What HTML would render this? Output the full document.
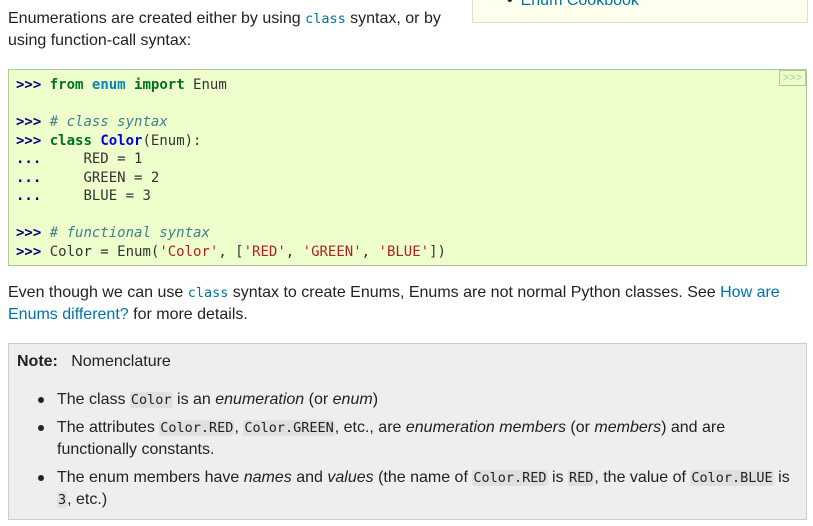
<!DOCTYPE html>
<html><head><meta charset="utf-8"><style>
body{margin:0;width:813px;height:526px;overflow:hidden;background:#fff;font-family:"Liberation Sans",sans-serif;font-size:16px;color:#222;}
.abs{position:absolute;}
p{margin:0;line-height:22px;}
code{font-family:"DejaVu Sans Mono","Liberation Mono",monospace;font-size:13.5px;}
.c{color:#0072aa;}
.nc{background:#e0e0e0;border-radius:3px;padding:0 1px;}
a{color:#0072aa;text-decoration:none;}
pre{margin:0;font-family:"DejaVu Sans Mono","Liberation Mono",monospace;font-size:14px;line-height:18.5px;color:#333;}
.k{color:#007020;font-weight:bold}
.cm{color:#408090;font-style:italic}
.s{color:#b22222}
.cl{color:#0000dd;font-weight:bold}
.pr{color:#000080;font-weight:bold}
ul{list-style:none}
li{line-height:22px;margin-bottom:6px;position:relative}
li:before{content:"";position:absolute;left:-19px;top:8px;width:6px;height:6px;border-radius:50%;background:#222}
</style></head><body>
<div class="abs" style="left:472px;top:-10px;width:334px;height:31px;background:#ffffee;border:1px solid #ddd;"></div>
<div class="abs" style="left:507px;top:-8px;color:#0072aa;"><span style="color:#222;margin-right:8px">•</span>Enum Cookbook</div>
<p class="abs" style="left:8px;top:8px;width:460px">Enumerations are created either by using <code class="c">class</code> syntax, or by using function-call syntax:</p>
<div class="abs" style="left:8px;top:69px;width:797px;height:195px;background:#eeffcc;border:1px solid #aacc99;">
<div class="abs" style="right:0;top:0;width:25px;height:14px;border:1px solid #aacc99;color:#aacc99;font-size:11px;line-height:14px;text-align:center">&gt;&gt;&gt;</div>
<pre style="position:absolute;left:7px;top:6px"><span class="pr">&gt;&gt;&gt;</span> <span class="k">from</span> <span class="cl" style="color:#0e84b5">enum</span> <span class="k">import</span> Enum

<span class="pr">&gt;&gt;&gt;</span> <span class="cm"># class syntax</span>
<span class="pr">&gt;&gt;&gt;</span> <span class="k">class</span> <span class="cl">Color</span>(Enum):
<span class="pr">...</span>     RED = 1
<span class="pr">...</span>     GREEN = 2
<span class="pr">...</span>     BLUE = 3

<span class="pr">&gt;&gt;&gt;</span> <span class="cm"># functional syntax</span>
<span class="pr">&gt;&gt;&gt;</span> Color = Enum(<span class="s">'Color'</span>, [<span class="s">'RED'</span>, <span class="s">'GREEN'</span>, <span class="s">'BLUE'</span>])</pre>
</div>
<p class="abs" style="left:8px;top:282px;width:800px">Even though we can use <code class="c">class</code> syntax to create Enums, Enums are not normal Python classes. See <a>How are Enums different?</a> for more details.</p>
<div class="abs" style="left:8px;top:343px;width:797px;height:175px;background:#eeeeee;border:1px solid #cccccc;">
<p class="abs" style="left:8px;top:7px"><b>Note:</b>&nbsp;&nbsp; Nomenclature</p>
<ul class="abs" style="left:0;top:45px;margin:0;padding-left:48px;width:745px">
<li>The class <code class="nc">Color</code> is an <i>enumeration</i> (or <i>enum</i>)</li>
<li>The attributes <code class="nc">Color.RED</code>, <code class="nc">Color.GREEN</code>, etc., are <i>enumeration members</i> (or <i>members</i>) and are functionally constants.</li>
<li>The enum members have <i>names</i> and <i>values</i> (the name of <code class="nc">Color.RED</code> is <code class="nc">RED</code>, the value of <code class="nc">Color.BLUE</code> is <code class="nc">3</code>, etc.)</li>
</ul>
</div>
</body></html>
